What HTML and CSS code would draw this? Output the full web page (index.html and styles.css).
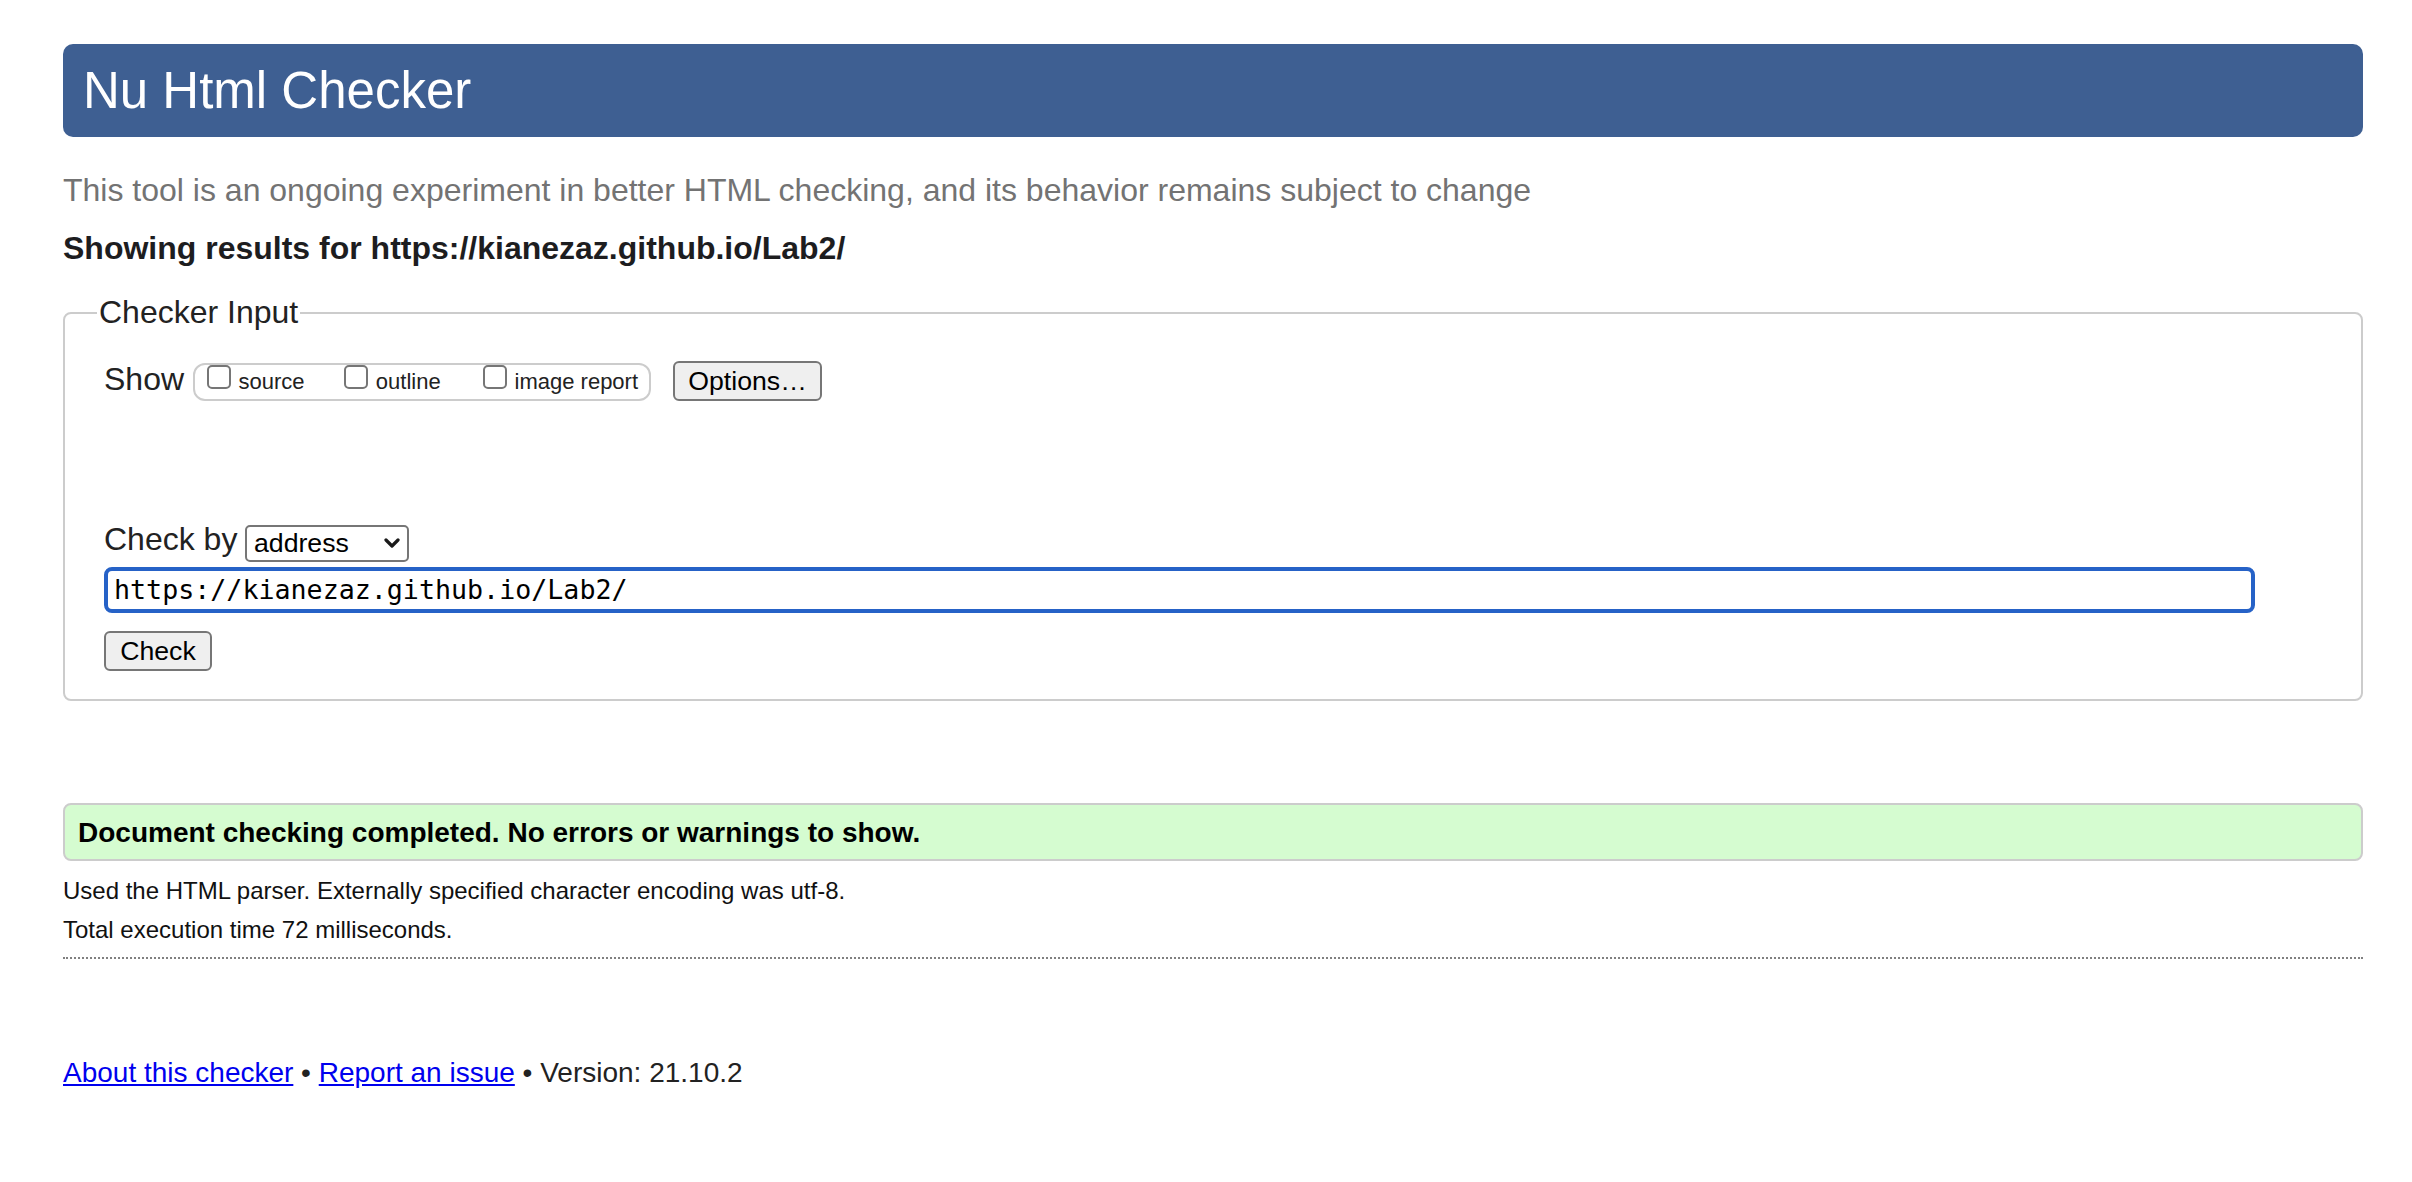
FILE: index.html
```html
<!DOCTYPE html>
<html lang="en">
<head>
<meta charset="utf-8">
<title>Nu Html Checker</title>
<link rel="stylesheet" href="styles.css">
</head>
<body>
<h1 class="title">Nu Html Checker</h1>
<p class="tagline">This tool is an ongoing experiment in better HTML checking, and its behavior remains subject to change</p>
<p class="results-for">Showing results for https://kianezaz.github.io/Lab2/</p>
<form class="checker">
  <fieldset class="input-set">
    <legend class="input-legend">Checker Input</legend>
    <div class="input-body">
      <div class="show-row">
        <span class="row-label">Show</span>
        <span class="show-group">
          <label class="opt opt-source"><input type="checkbox" class="cb"><span class="opt-text">source</span></label>
          <label class="opt opt-outline"><input type="checkbox" class="cb"><span class="opt-text">outline</span></label>
          <label class="opt"><input type="checkbox" class="cb"><span class="opt-text">image report</span></label>
        </span>
        <button type="button" class="btn btn-options">Options…</button>
      </div>
      <div class="by-row">
        <label class="row-label" for="docselect">Check by</label>
        <span class="select-wrap">
          <select class="by-select" id="docselect"><option>address</option><option>file upload</option><option>text input</option></select>
          <svg class="chev" width="16" height="11" viewBox="0 0 16 11"><polyline points="2,2 8,8 14,2" fill="none" stroke="#1a1a1a" stroke-width="3.2" stroke-linecap="round" stroke-linejoin="round"/></svg>
        </span>
      </div>
      <input class="url" type="url" value="https://kianezaz.github.io/Lab2/">
      <div class="submit-row"><button type="button" class="btn btn-check">Check</button></div>
    </div>
  </fieldset>
</form>
<p class="success">Document checking completed. No errors or warnings to show.</p>
<p class="meta meta-first">Used the HTML parser. Externally specified character encoding was utf-8.</p>
<p class="meta meta-second">Total execution time 72 milliseconds.</p>
<div class="sep"></div>
<p class="footer"><a href="#" class="flink">About this checker</a> • <a href="#" class="flink">Report an issue</a> • Version: 21.10.2</p>
</body>
</html>
```

FILE: styles.css
```css
* {
  box-sizing: border-box;
}

html {
  background: #fff;
}

body {
  margin: 0;
  padding: 0 49px 60px 63px;
  font-family: "Liberation Sans", Arial, Helvetica, sans-serif;
  color: #222;
}

.title {
  margin: 44px 0 0;
  height: 93px;
  padding: 0 20px;
  font-size: 51px;
  font-weight: normal;
  line-height: 93px;
  color: #fff;
  background: #3e5f92;
  border-radius: 10px;
}

.tagline {
  margin: 35px 0 0;
  font-size: 32px;
  line-height: 37px;
  color: #737373;
}

.results-for {
  margin: 21px 0 0;
  font-size: 32px;
  font-weight: bold;
  line-height: 37px;
  color: #1d1d1f;
}

.checker {
  margin: 0;
}

.input-set {
  margin: 27.4px 0 0;
  padding: 29.2px 39px 28px 39px;
  border: 2px solid #cccccc;
  border-radius: 8px;
  min-width: 0;
}

.input-legend {
  margin-left: -7px;
  padding: 0 2px;
  font-size: 32px;
  line-height: 37px;
  color: #222;
}

.input-body {
  display: flex;
  flex-direction: column;
  align-items: flex-start;
}

.show-row {
  display: flex;
  align-items: flex-start;
  height: 40.3px;
}

.row-label {
  font-size: 32px;
  line-height: 37px;
  color: #222;
}

.show-group {
  display: flex;
  align-items: flex-start;
  margin: 2.3px 0 0 9px;
  width: 458px;
  height: 38px;
  padding: 0 0 0 12px;
  border: 2px solid #cccccc;
  border-radius: 12px;
  overflow: hidden;
}

.opt {
  display: flex;
  flex: none;
  align-items: baseline;
  font-size: 22px;
  line-height: 25px;
  color: #222;
  white-space: nowrap;
}

.opt-source {
  width: 137.3px;
}

.opt-outline {
  width: 138.7px;
}

.cb {
  appearance: none;
  -webkit-appearance: none;
  display: block;
  flex: none;
  width: 24px;
  height: 24px;
  margin: 0;
  border: 2px solid #767676;
  border-radius: 5px;
  background: #fff;
}

.opt-text {
  margin-left: 7.5px;
}

.btn {
  appearance: none;
  -webkit-appearance: none;
  height: 40.3px;
  padding: 0;
  font-family: "Liberation Sans", Arial, Helvetica, sans-serif;
  font-size: 26.67px;
  line-height: 36px;
  color: #000;
  background: #efefef;
  border: 2px solid #767676;
  border-radius: 6px;
}

.btn-options {
  margin-left: 22px;
  width: 149px;
}

.by-row {
  display: flex;
  align-items: flex-start;
  margin-top: 120.4px;
}

.select-wrap {
  position: relative;
  display: block;
  margin: 3.3px 0 0 7.6px;
}

.by-select {
  appearance: none;
  -webkit-appearance: none;
  display: block;
  width: 164px;
  height: 37px;
  margin: 0;
  padding: 0 0 0 7px;
  font-family: "Liberation Sans", Arial, Helvetica, sans-serif;
  font-size: 26.67px;
  color: #000;
  background: #fff;
  border: 2px solid #767676;
  border-radius: 5px;
}

.chev {
  position: absolute;
  top: 13px;
  left: 139px;
  pointer-events: none;
}

.url {
  margin-top: 5px;
  width: 2151px;
  height: 46px;
  padding: 0 6px;
  font-family: "DejaVu Sans Mono", "Liberation Mono", monospace;
  font-size: 26.67px;
  color: #000;
  background: #fff;
  border: 4px solid #2662c7;
  border-radius: 8px;
  outline: none;
}

.submit-row {
  margin-top: 18px;
}

.btn-check {
  width: 108px;
}

.success {
  margin: 101.7px 0 0;
  padding: 2px 13px 0;
  font-size: 28px;
  font-weight: bold;
  line-height: 52px;
  color: #000;
  background: #d5fcd0;
  border: 2px solid #cccccc;
  border-radius: 8px;
}

.meta {
  margin: 0;
  font-size: 24px;
  line-height: 28px;
  color: #111;
}

.meta-first {
  margin-top: 16.7px;
}

.meta-second {
  margin-top: 10.3px;
}

.sep {
  margin-top: 13.3px;
  height: 0;
  border-top: 2px dotted #808080;
}

.footer {
  margin: 98.3px 0 0;
  font-size: 28px;
  line-height: 32px;
  color: #222;
}

.flink {
  color: #0000ee;
  text-decoration: underline;
}
```
